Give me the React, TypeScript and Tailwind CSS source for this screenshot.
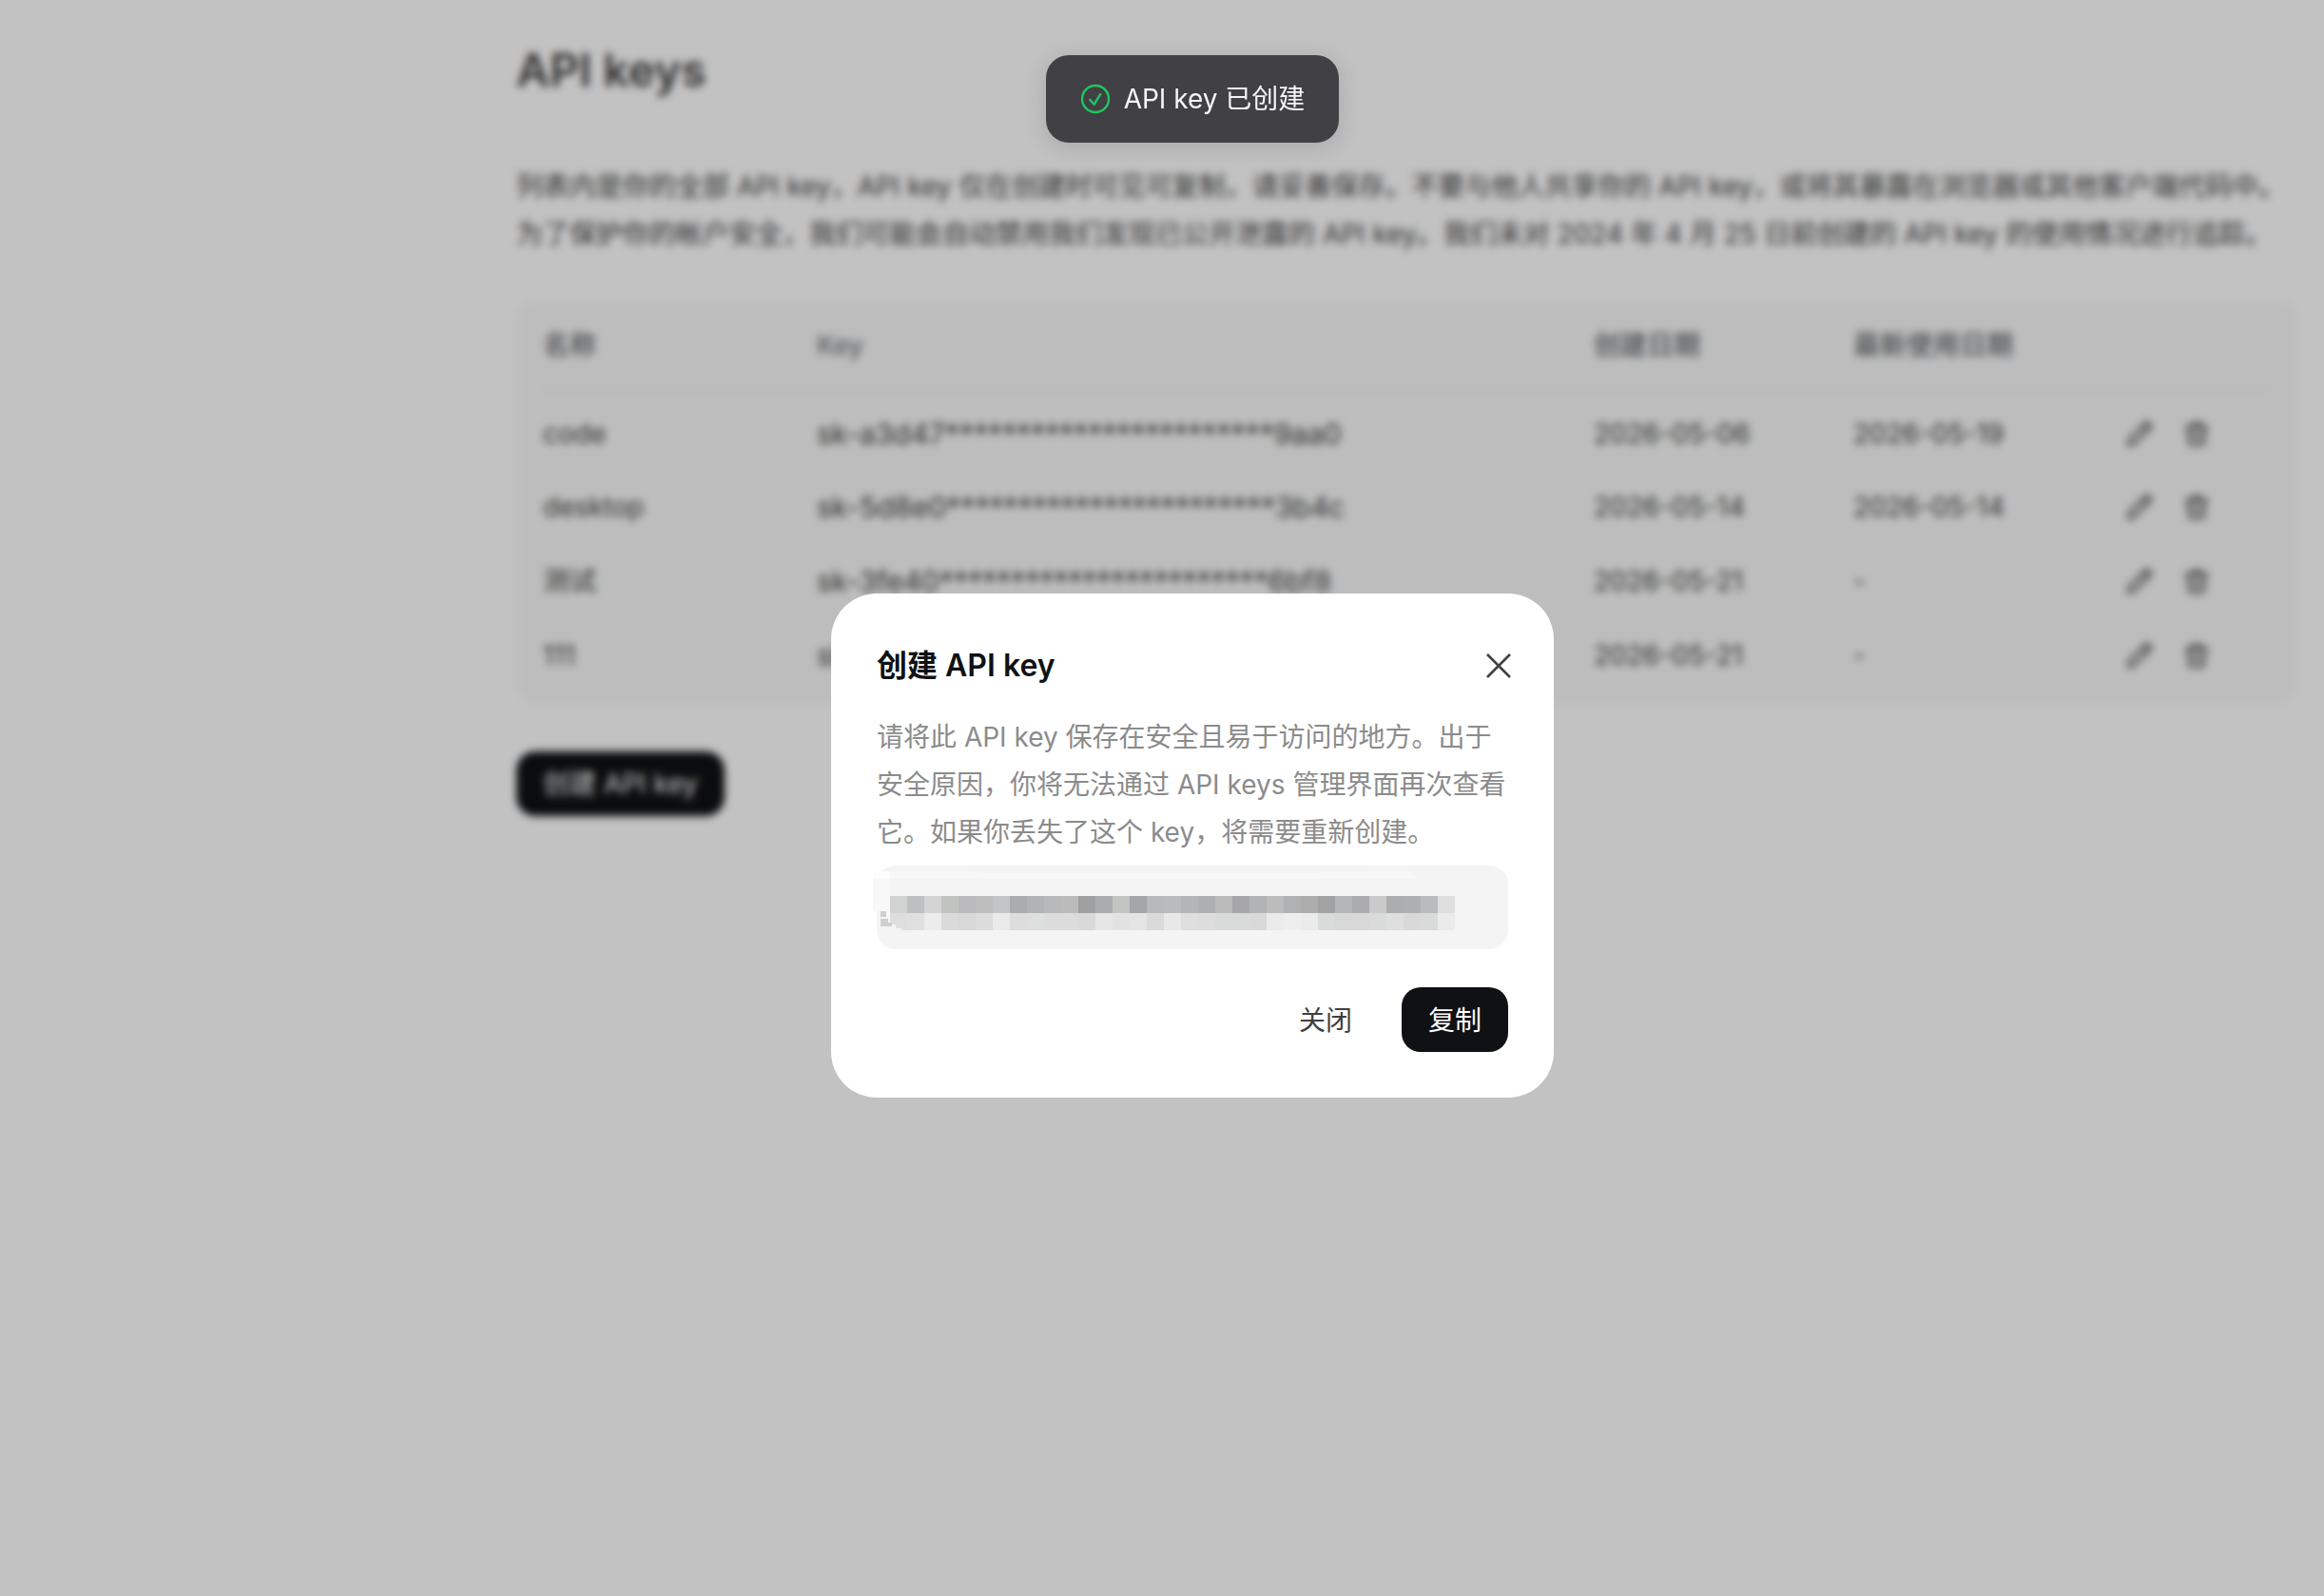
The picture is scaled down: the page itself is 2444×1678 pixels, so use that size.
type ApiKey = {
  name: string;
  key: string;
  createdAt: string;
  lastUsedAt: string;
};

const apiKeys: ApiKey[] = [
  { name: "code", key: "sk-a3d47***********************9aa0", createdAt: "2026-05-06", lastUsedAt: "2026-05-19" },
  { name: "desktop", key: "sk-5d8e0***********************3b4c", createdAt: "2026-05-14", lastUsedAt: "2026-05-14" },
  { name: "测试", key: "sk-3fe40***********************6bf8", createdAt: "2026-05-21", lastUsedAt: "-" },
  { name: "111", key: "sk", createdAt: "2026-05-21", lastUsedAt: "-" },
];

// grey levels of the mosaic that hides the new key, two rows of 18px cells
const mosaic = [
  ["d0d3d1", "bebfc1", "d4d4d4", "c1c3c1", "bababc", "bebebe", "c3c5c7", "abacae", "b1b3b5", "b7b9bb", "bbbbbb", "a0a0a0", "abacae", "c2c4c2", "a5a6a8", "b7b9bb", "b9bbbd", "b3b5b7", "adafb1", "bababa", "a7a7a9", "b1b3b5", "bcbcbc", "afb1b3", "adadad", "a2a2a3", "b4b6b8", "acacae", "cacaca", "abadaf", "adafb1", "b9bbbd", "dedede"],
  ["dedede", "e0e0e0", "ececec", "dadada", "d8d8d8", "dcdcdc", "eaeaea", "dddddd", "dbdfde", "dcdcdc", "dcdcdc", "d9d9d9", "e6e6e6", "e2e2e2", "e4e4e4", "dadada", "e8e8e8", "dedede", "dddddd", "d9dbda", "d9dbda", "d9d9d9", "ebebeb", "eeeeee", "ebebeb", "d9dbda", "d8d8d8", "d8d8d8", "d8dbda", "dedede", "d9d9d9", "d9dbda", "ebebeb"],
];

function MaskedKey() {
  return (
    <svg viewBox="0 0 664 88" className="block h-auto w-full overflow-visible" shapeRendering="crispEdges" role="img" aria-label="API key">
      <path d="M-4 6H14V48H-4Z" fill="#f8f8f8" />
      <path d="M14 6H90L120 8H440L540 6H560L568 14H14Z" fill="#f7f7f7" />
      <path d="M-4 6H14V14H-4Z" fill="#fcfcfc" />
      {mosaic.map((row, y) =>
        row.map((color, x) => (
          <rect key={`${x}-${y}`} x={14 + x * 18} y={32 + y * 18} width="18" height="18" fill={`#${color}`} />
        ))
      )}
      <path d="M4 48H10V54H4ZM4 56H12V60H16V64H4Z" fill="#cfcfcf" />
      <path d="M10 46H14V58H12V56H10Z" fill="#f8f8f8" />
      <path d="M16 62H20V66H26V68H14V64H16Z" fill="#f4f4f4" />
    </svg>
  );
}

function PencilIcon() {
  return (
    <svg viewBox="0 0 28 28" className="size-7" fill="none" stroke="currentColor" strokeWidth="2.4" strokeLinejoin="round" aria-hidden="true">
      <path d="M2 26l1.4-6.4L20.6 2.4a2 2 0 0 1 2.8 0l2.2 2.2a2 2 0 0 1 0 2.8L8.4 24.6zM17.5 5.5l5 5" />
    </svg>
  );
}

function TrashIcon() {
  return (
    <svg viewBox="0 0 28 28" className="size-7" fill="none" stroke="currentColor" strokeWidth="2.4" strokeLinecap="round" strokeLinejoin="round" aria-hidden="true">
      <path d="M2.5 7h23M9 7l1.4-4h7.2L19 7M5 7l1.4 16.6a2.4 2.4 0 0 0 2.4 2.2h10.4a2.4 2.4 0 0 0 2.4-2.2L23 7M11 12.5v7.5M17 12.5v7.5" />
    </svg>
  );
}

function KeysPage() {
  return (
    <main className="pr-[29px] pl-[543px] pt-10 text-[28px] leading-[50px] text-[#404040]">
      <h1 className="text-[48px] font-semibold leading-[68px]">API keys</h1>
      <p className="mt-[63px] whitespace-nowrap">
        列表内是你的全部 API key，API key 仅在创建时可见可复制，请妥善保存。不要与他人共享你的 API key，或将其暴露在浏览器或其他客户端代码中。
        <br />
        为了保护你的帐户安全，我们可能会自动禁用我们发现已公开泄露的 API key。我们未对 2024 年 4 月 25 日前创建的 API key 的使用情况进行追踪。
      </p>
      <div className="mt-[45px] rounded-[20px] bg-[#f9f9f9] px-7 pb-3">
        <table className="w-full table-fixed text-left">
          <colgroup>
            <col className="w-[288px]" />
            <col />
            <col className="w-[273px]" />
            <col className="w-[287px]" />
            <col className="w-[151px]" />
          </colgroup>
          <thead>
            <tr className="h-[94px] border-b-2 border-[#f0f0f0] text-[#61666b]">
              <th className="font-medium">名称</th>
              <th className="font-normal">Key</th>
              <th className="font-medium">创建日期</th>
              <th className="font-medium">最新使用日期</th>
              <td />
            </tr>
          </thead>
          <tbody>
            {apiKeys.map((item) => (
              <tr key={item.name} className="h-[78px] first:h-[84px] first:[&>td]:pt-1.5">
                <td>{item.name}</td>
                <td className="text-[30px]">{item.key}</td>
                <td>{item.createdAt}</td>
                <td>{item.lastUsedAt}</td>
                <td>
                  <div className="flex gap-8">
                    <button type="button" aria-label="编辑">
                      <PencilIcon />
                    </button>
                    <button type="button" aria-label="删除">
                      <TrashIcon />
                    </button>
                  </div>
                </td>
              </tr>
            ))}
          </tbody>
        </table>
      </div>
      <button type="button" className="mt-[50px] h-[68px] rounded-[20px] bg-[#0f1115] px-7 text-white">
        创建 API key
      </button>
    </main>
  );
}

function Toast() {
  return (
    <div className="fixed inset-x-0 top-[58px] flex justify-center pl-16">
      <div role="status" className="flex h-[92px] items-center gap-3.5 rounded-3xl bg-[#414045] px-9 text-[28px] text-[#f5f5f5] shadow-[0_4px_24px_rgba(0,0,0,0.14)]">
        <svg viewBox="0 0 32 32" className="size-8" fill="none" stroke="#22c55e" strokeWidth="2.4" strokeLinecap="round" strokeLinejoin="round" aria-hidden="true">
          <circle cx="16" cy="16" r="14" />
          <path d="M10.2 16.8l4.4 5 6.6-10.8" />
        </svg>
        <span>API key 已创建</span>
      </div>
    </div>
  );
}

function CreatedDialog() {
  return (
    <div className="fixed inset-0 flex items-center justify-center bg-black/24 pl-16 pt-[100px] backdrop-blur-[4px]">
      <section role="dialog" aria-modal="true" aria-labelledby="dialog-title" className="w-[760px] rounded-[48px] bg-white p-12">
        <header className="flex items-center justify-between">
          <h2 id="dialog-title" className="text-[32px] font-semibold leading-[56px] text-[#0f1115]">
            创建 API key
          </h2>
          <button type="button" aria-label="关闭对话框" className="-mr-1 text-[#404040]">
            <svg viewBox="0 0 28 28" className="size-7" fill="none" stroke="currentColor" strokeWidth="2.6" aria-hidden="true">
              <path d="M2 2l24 24M26 2L2 26" />
            </svg>
          </button>
        </header>
        <p className="mt-[22px] text-[28px] leading-[50px] text-[#8b8b8b]">
          请将此 API key 保存在安全且易于访问的地方。出于安全原因，你将无法通过 API keys 管理界面再次查看它。如果你丢失了这个 key，将需要重新创建。
        </p>
        <div className="mt-2.5 rounded-[20px] bg-[#f4f4f4]">
          <MaskedKey />
        </div>
        <footer className="mt-10 flex justify-end gap-6 text-[28px]">
          <button type="button" className="h-[68px] rounded-[20px] px-7 pt-0.5 text-[#404040]">
            关闭
          </button>
          <button type="button" className="h-[68px] rounded-[20px] bg-[#0f1115] px-7 pt-0.5 text-white">
            复制
          </button>
        </footer>
      </section>
    </div>
  );
}

export default function App() {
  return (
    <div className="min-h-screen overflow-x-hidden bg-white font-[Inter,'Noto_Sans_CJK_SC',sans-serif]" lang="zh-CN">
      <KeysPage />
      <CreatedDialog />
      <Toast />
    </div>
  );
}
